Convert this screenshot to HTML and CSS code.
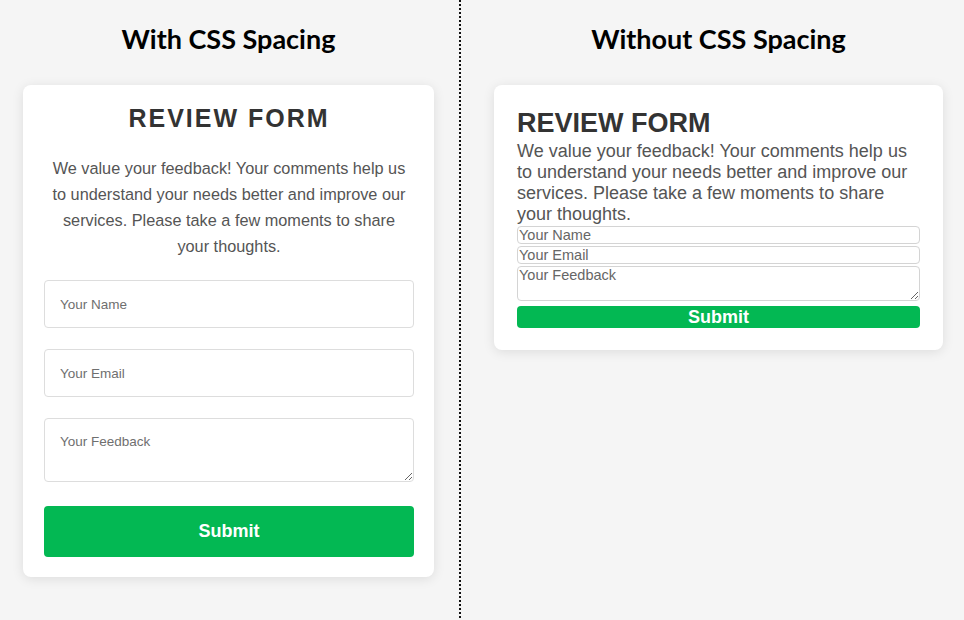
FILE: index.html
```html
<!DOCTYPE html>
<html>
    <head>
        <meta charset="utf-8">
        <title>CSS Spacing</title>
        <link rel="stylesheet" href="styles.css">
    </head>
    <body>
        <div class="compare">
            <section class="panel panel-left">
                <h2 class="panel-title">With CSS Spacing</h2>
                <div class="card spaced">
                    <h1>REVIEW FORM</h1>
                    <p>We value your feedback! Your comments help us to understand your needs better and improve our services. Please take a few moments to share your thoughts.</p>
                    <form>
                        <input type="text" placeholder="Your Name">
                        <input type="email" placeholder="Your Email">
                        <textarea placeholder="Your Feedback"></textarea>
                        <button type="button">Submit</button>
                    </form>
                </div>
            </section>

            <div class="divider"></div>

            <section class="panel panel-right">
                <h2 class="panel-title">Without CSS Spacing</h2>
                <div class="card plain">
                    <h1>REVIEW FORM</h1>
                    <p>We value your feedback! Your comments help us to understand your needs better and improve our services. Please take a few moments to share your thoughts.</p>
                    <form>
                        <input type="text" placeholder="Your Name">
                        <input type="email" placeholder="Your Email">
                        <textarea placeholder="Your Feedback"></textarea>
                        <button type="button">Submit</button>
                    </form>
                </div>
            </section>
        </div>
    </body>
</html>
```

FILE: styles.css
```css
body{
    margin: 0;
    background: #f5f5f5;
    font-family: "Liberation Sans", Arial, sans-serif;
}

.compare{
    display: flex;
    height: 620px;
}

.panel{
    box-sizing: border-box;
}
.panel-left{
    width: 459px;
    padding: 0 25px 0 23px;
}
.panel-right{
    flex: 1;
    padding: 0 21px 0 33px;
}

.panel-title{
    margin: 0;
    padding: 22px 0 29px;
    text-align: center;
    font-family: Lato, sans-serif;
    font-weight: 700;
    font-size: 27px;
    line-height: 34px;
    color: #000;
}

.divider{
    width: 2px;
    background: repeating-linear-gradient(to bottom, #111 0 2px, transparent 2px 4px);
}

.card{
    background: #fff;
    border-radius: 8px;
    box-shadow: 0 2px 12px rgba(0, 0, 0, 0.1);
}

.card h1{
    margin: 0;
    color: #333;
    font-weight: 700;
}
.card p{
    margin: 0;
    color: #555;
}
.card form{
    display: flex;
    flex-direction: column;
}
.card input, .card textarea{
    display: block;
    box-sizing: border-box;
    width: 100%;
    border: 1px solid #ddd;
    border-radius: 4px;
    font-family: "Liberation Sans", Arial, sans-serif;
    color: #333;
    background: #fff;
}
.card input::placeholder, .card textarea::placeholder{
    color: #6f6f6f;
}
.card button{
    border: none;
    border-radius: 4px;
    background: #03b853;
    color: #fff;
    font-family: "Liberation Sans", Arial, sans-serif;
    font-weight: 700;
    font-size: 18px;
}

/* with spacing */
.spaced{
    padding: 18px 20px 20px 21px;
}
.spaced h1{
    text-align: center;
    font-size: 25px;
    line-height: 30px;
    letter-spacing: 2px;
}
.spaced p{
    margin: 22px 0 21px;
    padding: 0 6px;
    text-align: center;
    font-size: 16.3px;
    line-height: 26px;
}
.spaced form{
    gap: 21px;
}
.spaced input{
    height: 48px;
    padding: 0 15px;
    font-size: 13.5px;
}
.spaced textarea{
    height: 64px;
    padding: 15px;
    font-size: 13.5px;
}
.spaced button{
    margin-top: 3px;
    height: 51px;
}

/* without spacing */
.plain{
    padding: 23px 23px 22px;
}
.plain h1{
    font-size: 27px;
    line-height: 30px;
}
.plain p{
    margin: 3px 0 1px;
    font-size: 18px;
    line-height: 21px;
}
.plain form{
    gap: 2px;
}
.plain input{
    height: 18px;
    padding: 0 1px;
    font-size: 14.5px;
    border-color: #d4d4d4;
}
.plain input::placeholder, .plain textarea::placeholder{
    color: #666;
}
.plain textarea{
    height: 35px;
    padding: 0 1px;
    font-size: 14.5px;
    border-color: #d4d4d4;
}
.plain button{
    margin-top: 3px;
    height: 22px;
    padding: 0;
    line-height: 22px;
}
```
